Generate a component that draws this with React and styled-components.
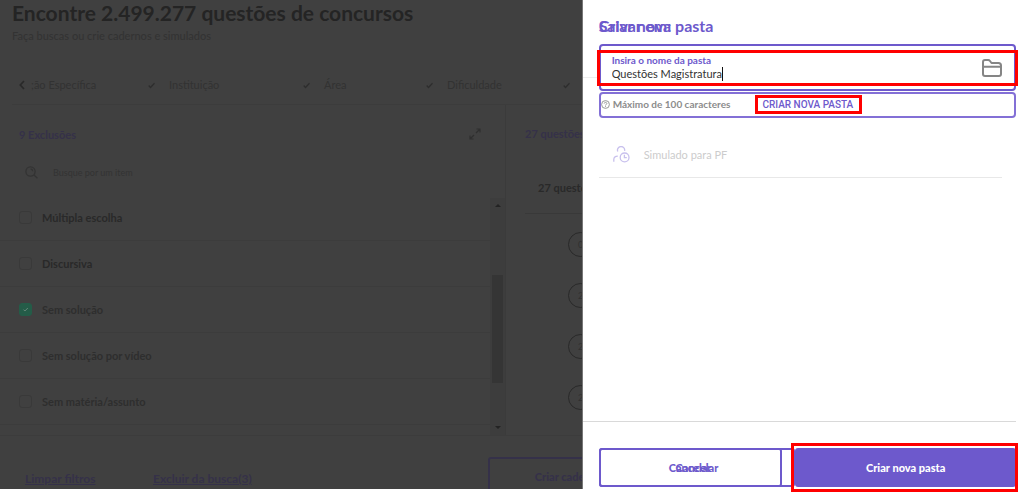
import { useState } from "react";
import styled, { createGlobalStyle, css } from "styled-components";

const steps = [";ão Específica", "Instituição", "Área", "Dificuldade", ""];

const filters = [
  { id: "multipla", label: "Múltipla escolha" },
  { id: "discursiva", label: "Discursiva" },
  { id: "solucao", label: "Sem solução", checked: true },
  { id: "video", label: "Sem solução por vídeo" },
  { id: "materia", label: "Sem matéria/assunto" },
];

const results = ["0", "2", "2", "2"];

export default function App() {
  return (
    <Screen>
      <GlobalStyle />
      <SearchPage />
      <FolderDrawer />
    </Screen>
  );
}

function SearchPage() {
  return (
    <Page>
      <Intro>
        <h1>Encontre 2.499.277 questões de concursos</h1>
        <p>Faça buscas ou crie cadernos e simulados</p>
      </Intro>

      <Steps>
        {steps.map((step, i) => (
          <li key={i}>
            {i === 0 ? <BackIcon /> : <CheckIcon />}
            {step}
          </li>
        ))}
      </Steps>

      <Columns>
        <FilterPanel>
          <PanelTitle>
            <h2>9 Exclusões</h2>
            <IconButton aria-label="Expandir"><ExpandIcon /></IconButton>
          </PanelTitle>
          <SearchBox>
            <SearchIcon />
            <input type="text" placeholder="Busque por um item" aria-label="Busque por um item" />
          </SearchBox>
          <ListArea>
            <FilterList>
              {filters.map((filter) => <FilterRow key={filter.id} {...filter} />)}
            </FilterList>
            <Scrollbar>
              <Arrow />
              <Thumb />
              <Arrow $down />
            </Scrollbar>
          </ListArea>
        </FilterPanel>

        <ResultPanel>
          <h2>27 questões</h2>
          <h3>27 questões</h3>
          <ol>
            {results.map((number, i) => <li key={i}><span>{number}</span></li>)}
          </ol>
        </ResultPanel>
      </Columns>

      <PageFooter>
        <a href="#limpar">Limpar filtros</a>
        <a href="#excluir">Excluir da busca(3)</a>
        <button>Criar caderno</button>
      </PageFooter>
    </Page>
  );
}

function FilterRow({ id, label, checked }) {
  const [isChecked, setIsChecked] = useState(Boolean(checked));

  return (
    <Row $dim={label.startsWith("Sem")}>
      <input id={id} type="checkbox" checked={isChecked} onChange={() => setIsChecked(!isChecked)} />
      <label htmlFor={id}>{label}</label>
    </Row>
  );
}

function FolderDrawer() {
  const [name, setName] = useState("Questões Magistratura");

  return (
    <Drawer>
      <DrawerHeader>
        <h2>Salvar em:</h2>
        <h2>Criar nova pasta</h2>
      </DrawerHeader>

      <DrawerBody>
        <NameField>
          <FieldText>
            <label htmlFor="folder">Insira o nome da pasta</label>
            <div>
              <input id="folder" type="text" maxLength={100} value={name} onChange={(e) => setName(e.target.value)} />
              <Caret />
            </div>
          </FieldText>
          <FolderIcon />
        </NameField>
        <HintBar>
          <HelpIcon />
          <span>Máximo de 100 caracteres</span>
          <NewFolder>CRIAR NOVA PASTA</NewFolder>
        </HintBar>
        <SavedItem>
          <UserClockIcon />
          Simulado para PF
        </SavedItem>
      </DrawerBody>

      <DrawerFooter>
        <CancelStack>
          <CancelButton $narrow>Cancelar</CancelButton>
          <CancelButton>Cancelar</CancelButton>
        </CancelStack>
        <CreateButton>Criar nova pasta</CreateButton>
      </DrawerFooter>
    </Drawer>
  );
}

function BackIcon() {
  return (
    <svg width="6" height="10" viewBox="0 0 6 10" fill="none" stroke="#292929" strokeWidth="1.7">
      <path d="M5 1 1.3 5 5 9" />
    </svg>
  );
}

function CheckIcon() {
  return (
    <svg width="7" height="7" viewBox="0 0 7 7" fill="none" stroke="#2d2d2d" strokeWidth="1.3">
      <path d="M.7 3.5 2.5 5.5 6.5 1.2" />
    </svg>
  );
}

function ExpandIcon() {
  return (
    <svg width="12" height="12" viewBox="0 0 12 12" fill="none" stroke="#2f2f2f" strokeWidth="1.2">
      <path d="M7.5 1H11V4.5M11 1 7 5M1 7.5V11H4.5M1 11 5 7" />
    </svg>
  );
}

function SearchIcon() {
  return (
    <svg width="13" height="13" viewBox="0 0 13 13" fill="none" stroke="#333333" strokeWidth="1.3">
      <circle cx="5.5" cy="5.5" r="4.6" />
      <path d="M9 9 12.4 12.3M5.6 3a2.5 2.5 0 0 1 2.2 2.2" />
    </svg>
  );
}

function FolderIcon() {
  return (
    <svg width="20" height="18" viewBox="0 0 20 18" fill="none" stroke="#858585" strokeWidth="2" strokeLinejoin="round">
      <path d="M1 3Q1 1 3 1H6.2Q7.2 1 8 2L9.5 4H16.5Q19 4 19 6.5V15Q19 17 17 17H3Q1 17 1 15ZM1 7.7H19" />
    </svg>
  );
}

function HelpIcon() {
  return (
    <svg width="9" height="9" viewBox="0 0 9 9" fill="none" stroke="#8d8d8d" strokeWidth="0.9">
      <circle cx="4.5" cy="4.5" r="3.9" />
      <path d="M3.2 3.6C3.2 1.9 5.9 2 5.8 3.6 5.8 4.5 4.5 4.4 4.5 5.5M4.5 6.2V7.1" />
    </svg>
  );
}

function UserClockIcon() {
  return (
    <svg width="17" height="17" viewBox="0 0 17 17" fill="none" stroke="#c8c0ed" strokeWidth="1.3">
      <path d="M4.8 5.6A3.6 3.6 0 1 1 11.6 4.8M.8 15.8V13.5Q.9 10.3 4.8 10.2" />
      <circle cx="11.6" cy="11.4" r="4.4" />
      <path d="M11.4 8.8V11.7H13.8" />
    </svg>
  );
}

const GlobalStyle = createGlobalStyle`
  * {
    box-sizing: border-box;
  }

  body, h1, h2, h3, p, ol, ul {
    margin: 0;
    padding: 0;
  }

  ol, ul {
    list-style: none;
  }

  body {
    background: #ffffff;
  }

  body, button, input {
    font-family: Lato, "Liberation Sans", sans-serif;
  }
`;

const Screen = styled.div`
  display: grid;
  grid-template-columns: minmax(0, 569fr) minmax(0, 431fr);
  min-height: 100vh;
  overflow: hidden;
`;

const Page = styled.main`
  display: flex;
  flex-direction: column;
  margin-bottom: 7px;
  overflow: hidden;
  white-space: nowrap;
  background: #404040;
  border-right: 1px solid #777777;
  color: #2b2b2b;
`;

const Intro = styled.header`
  padding: 1px 12px 0;

  h1 {
    font-size: 21px;
    line-height: 24px;
    font-weight: 700;
    color: #242424;
  }

  p {
    margin-top: 4px;
    font-size: 11px;
    line-height: 14px;
    font-weight: 500;
    color: #333333;
  }
`;

const Steps = styled.ul`
  display: grid;
  grid-template-columns: 129px 155px 123px 137px 20px;
  margin: 23px 0 0 12px;
  padding: 9px 0 9px 7px;
  border-bottom: 1px solid #3c3c3c;
  font-size: 11px;
  line-height: 20px;
  color: #323232;

  li {
    display: flex;
    align-items: center;
    gap: 14px;
  }

  li:first-child {
    gap: 6px;
  }
`;

const Columns = styled.div`
  display: flex;
`;

const FilterPanel = styled.section`
  flex: none;
  width: 506px;
  border-right: 1px solid #3b3b3b;
`;

const PanelTitle = styled.div`
  display: flex;
  justify-content: space-between;
  align-items: center;
  height: 58px;
  padding: 0 24px 0 19px;

  h2 {
    font-size: 11px;
    font-weight: 700;
    color: #353149;
  }
`;

const IconButton = styled.button`
  display: flex;
  padding: 0;
  border: none;
  background: none;
  cursor: pointer;
`;

const SearchBox = styled.div`
  display: flex;
  align-items: center;
  gap: 15px;
  height: 18px;
  margin-bottom: 17px;
  padding: 0 25px;

  input {
    flex: 1;
    padding: 0;
    border: none;
    outline: none;
    background: none;
    font-size: 9px;
    color: #333333;
  }

  input::placeholder {
    color: #333333;
    opacity: 1;
  }
`;

const ListArea = styled.div`
  display: flex;
  height: 237px;
`;

const FilterList = styled.ul`
  flex: 1;
  overflow: hidden;
  margin-top: -3px;
`;

const Row = styled.li`
  display: flex;
  align-items: center;
  height: 46px;
  padding-left: 19px;
  border-bottom: 1px solid #3c3c3c;
  font-size: 11px;
  font-weight: 700;
  color: ${({ $dim }) => ($dim ? "#2e2e2e" : "#292929")};

  input {
    appearance: none;
    width: 13px;
    height: 13px;
    margin: 0 10px 0 0;
    border: 1px solid #393939;
    border-radius: 3px;
  }

  input:checked {
    border-color: #245c48;
    background: #245c48 url("data:image/svg+xml,%3Csvg xmlns='http://www.w3.org/2000/svg' viewBox='0 0 11 11' fill='none' stroke='%2368877b'%3E%3Cpath d='M3.5 5.6 4.9 7 7.8 4'/%3E%3C/svg%3E");
  }
`;

const Scrollbar = styled.div`
  display: flex;
  flex-direction: column;
  align-items: center;
  width: 15px;
  padding: 6px 0;
  background: #3d3d3d;
`;

const Arrow = styled.span`
  border: 3px solid transparent;
  border-top-width: 0;
  border-bottom-color: #232323;
  ${({ $down }) => $down && css`
    margin-top: auto;
    border-top: 3px solid #232323;
    border-bottom-width: 0;
  `}
`;

const Thumb = styled.span`
  width: 11px;
  height: 108px;
  margin-top: 68px;
  background: #353535;
`;

const ResultPanel = styled.section`
  flex: 1;
  min-width: 0;
  padding-left: 19px;

  h2, h3 {
    font-size: 11px;
    line-height: 58px;
    font-weight: 700;
    color: #353149;
  }

  h3 {
    padding-left: 13px;
    line-height: 50px;
    border-bottom: 1px solid #393939;
    color: #292929;
  }

  ol {
    display: flex;
    flex-direction: column;
    gap: 26px;
    padding: 18px 0 0 43px;
  }

  span {
    display: flex;
    align-items: center;
    justify-content: center;
    width: 25px;
    height: 25px;
    border: 1px solid #292929;
    border-radius: 50%;
    font-size: 9px;
    color: #303030;
  }
`;

const PageFooter = styled.footer`
  display: flex;
  flex: 1;
  align-items: flex-start;
  padding: 21px 0 0 25px;
  border-top: 1px solid #3c3c3c;

  a {
    flex: none;
    width: 128px;
    padding-top: 14px;
    font-size: 12px;
    line-height: 16px;
    font-weight: 700;
    color: #353149;
  }

  /* the lower edge runs out of the visible page */
  button {
    flex: none;
    width: 160px;
    height: 38px;
    margin: 0 0 -8px 207px;
    border: 2px solid #353149;
    border-radius: 3px;
    background: none;
    font-size: 11px;
    font-weight: 900;
    color: #353149;
  }
`;

const Drawer = styled.aside`
  display: flex;
  flex-direction: column;
  min-width: 0;
  padding-right: 8px;
  background: #ffffff;
`;

/* thick red frame that calls out the element it surrounds */
const highlight = css`
  position: relative;

  &::after {
    content: "";
    position: absolute;
    border: 3px solid #ff0000;
    pointer-events: none;
  }
`;

const DrawerHeader = styled.header`
  display: grid;
  height: 78px;
  padding: 16px 0 0 16px;
  border-bottom: 1px solid #eeeeee;

  h2 {
    grid-area: 1 / 1;
    font-size: 16px;
    line-height: 20px;
    font-weight: 700;
    color: #6d59cc;
  }
`;

const DrawerBody = styled.div`
  flex: 1;
  margin-top: -34px;
  padding-left: 16px;
`;

const NameField = styled.div`
  ${highlight}
  display: flex;
  align-items: center;
  justify-content: space-between;
  height: 47px;
  padding: 0 12px 0 11px;
  background: #ffffff;
  border: 2px solid #6d59cc;
  border-radius: 4px;

  &::after {
    inset: 4px -4px 3px;
  }
`;

const FieldText = styled.div`
  label {
    display: block;
    font-size: 10px;
    line-height: 13px;
    font-weight: 700;
    color: #6d59cc;
  }

  div {
    display: flex;
    align-items: center;
  }

  input {
    field-sizing: content;
    padding: 0;
    border: none;
    outline: none;
    font-size: 11px;
    line-height: 14px;
    color: #333333;
  }
`;

const Caret = styled.span`
  width: 1px;
  height: 14px;
  background: #111111;
`;

const HintBar = styled.div`
  display: flex;
  align-items: center;
  height: 26px;
  margin-top: 1px;
  padding-bottom: 2px;
  border: 2px solid #8370d6;
  border-radius: 4px;
  font-size: 10px;
  font-weight: 700;
  color: #8c8c8c;

  svg {
    flex: none;
    margin-right: 3px;
  }
`;

const NewFolder = styled.button`
  ${highlight}
  margin-left: 32px;
  padding: 0;
  border: none;
  background: none;
  font-family: Roboto, sans-serif;
  font-size: 10px;
  line-height: 13px;
  font-weight: 500;
  color: #6d59cc;
  cursor: pointer;

  &::after {
    inset: -3px -9px -3px -7px;
  }
`;

const SavedItem = styled.div`
  display: flex;
  align-items: center;
  gap: 14px;
  height: 46px;
  margin: 14px 14px 0 0;
  padding-left: 14px;
  border-bottom: 1px solid #e8e8e8;
  font-size: 11px;
  color: #cccccc;
`;

const DrawerFooter = styled.footer`
  display: flex;
  padding: 26px 0 9px 16px;
  border-top: 1px solid #d9d9d9;
`;

const CancelStack = styled.div`
  display: grid;
  flex: 197;
`;

const CancelButton = styled.button`
  grid-area: 1 / 1;
  width: ${({ $narrow }) => ($narrow ? "93%" : "100%")};
  height: 39px;
  border: 2px solid #6d59cc;
  border-radius: 3px;
  background: none;
  font-size: 11px;
  font-weight: 900;
  color: #6d59cc;
  cursor: pointer;
`;

const CreateButton = styled.button`
  ${highlight}
  flex: 221;
  height: 39px;
  padding: 0;
  border: none;
  border-radius: 3px;
  background: #6d59cc;
  font-size: 11px;
  font-weight: 900;
  color: #ffffff;
  cursor: pointer;

  &::after {
    inset: -5px -2px -5px -4px;
  }
`;
